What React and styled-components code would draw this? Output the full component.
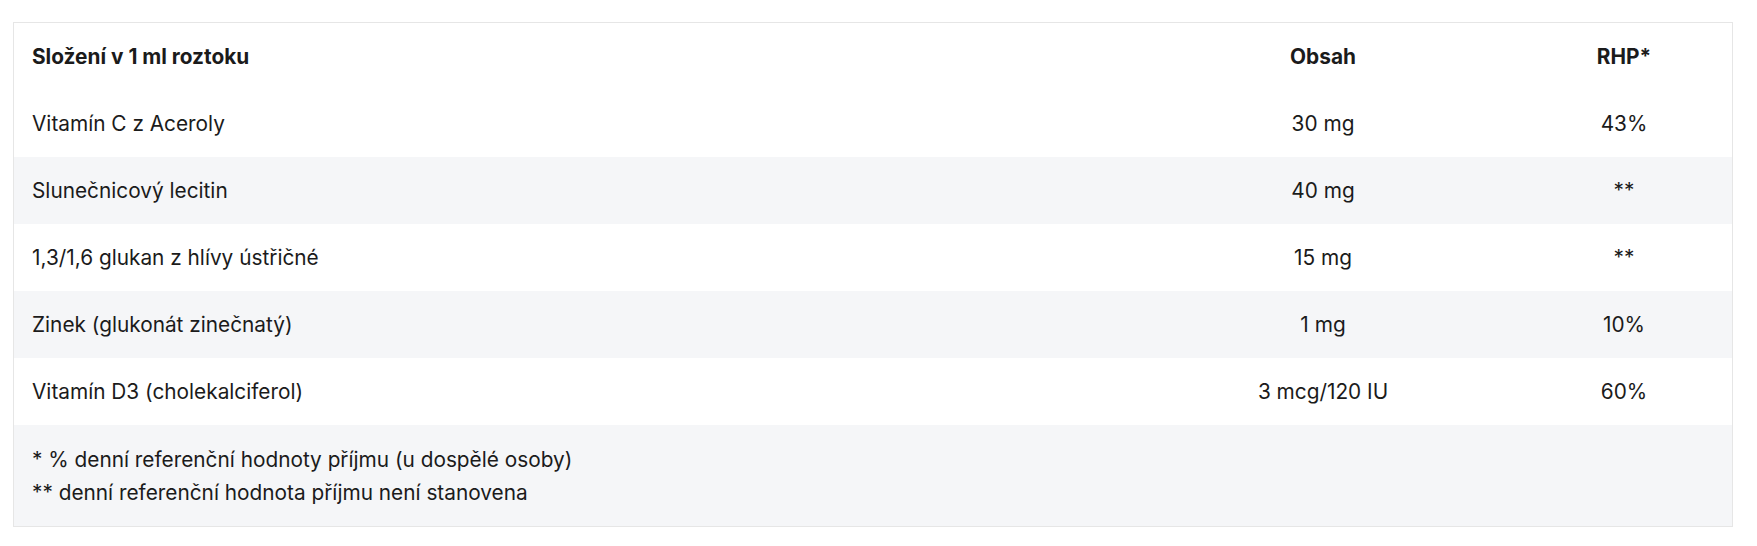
import React from 'react';
import styled, { createGlobalStyle } from 'styled-components';

const GlobalStyle = createGlobalStyle`
  html, body {
    margin: 0;
    padding: 0;
    background: #ffffff;
  }
  body {
    font-family: Inter, "Noto Sans", sans-serif;
    color: #1b1b1b;
  }
`;

const Page = styled.div`
  padding: 22px 24px 0 13px;
`;

const Table = styled.div`
  border: 1px solid #e6e6e6;
  background: #ffffff;
`;

const Row = styled.div`
  display: grid;
  grid-template-columns: 1fr 386px 216px;
  background: ${p => (p.$shaded ? '#f5f6f8' : '#ffffff')};
`;

const Cell = styled.div`
  padding: 20px 18px;
  font-size: 20.8px;
  line-height: 27px;
  font-weight: ${p => (p.$head ? 700 : 400)};
  text-align: ${p => (p.$center ? 'center' : 'left')};
  white-space: nowrap;
`;

const Footer = styled.div`
  background: #f5f6f8;
  padding: 18px 18px 17px;
`;

const Note = styled.p`
  margin: 0;
  font-size: 20.8px;
  line-height: 33px;
`;

const rows = [
  ['Vitamín C z Aceroly', '30 mg', '43%'],
  ['Slunečnicový lecitin', '40 mg', '**'],
  ['1,3/1,6 glukan z hlívy ústřičné', '15 mg', '**'],
  ['Zinek (glukonát zinečnatý)', '1 mg', '10%'],
  ['Vitamín D3 (cholekalciferol)', '3 mcg/120 IU', '60%'],
];

export default function App() {
  return (
    <Page>
      <GlobalStyle />
      <Table>
        <Row>
          <Cell $head>Složení v 1 ml roztoku</Cell>
          <Cell $head $center>Obsah</Cell>
          <Cell $head $center>RHP*</Cell>
        </Row>
        {rows.map((r, i) => (
          <Row key={r[0]} $shaded={i % 2 === 1}>
            <Cell>{r[0]}</Cell>
            <Cell $center>{r[1]}</Cell>
            <Cell $center>{r[2]}</Cell>
          </Row>
        ))}
        <Footer>
          <Note>* % denní referenční hodnoty příjmu (u dospělé osoby)</Note>
          <Note>** denní referenční hodnota příjmu není stanovena</Note>
        </Footer>
      </Table>
    </Page>
  );
}
